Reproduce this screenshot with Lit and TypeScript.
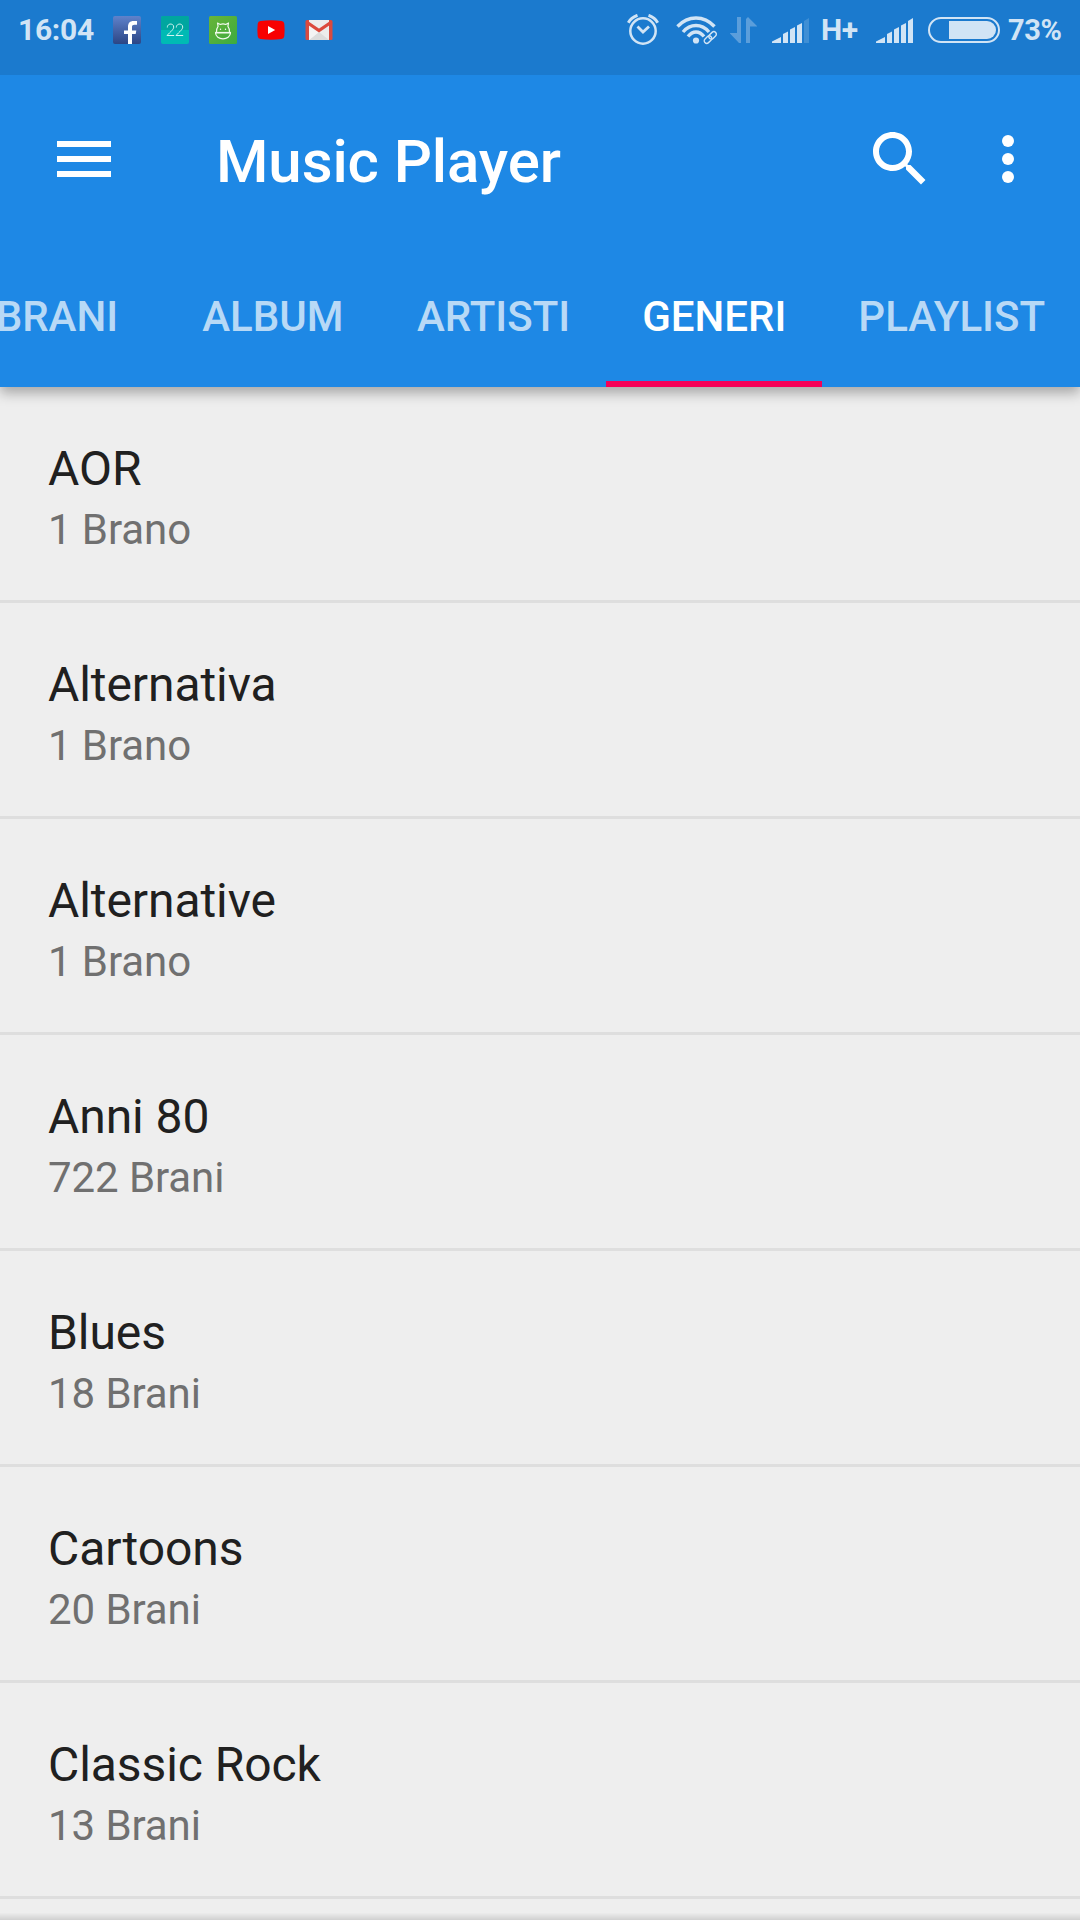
import { LitElement, html, css } from "lit";
import { customElement, property } from "lit/decorators.js";

interface Genre {
  name: string;
  count: string;
}

const TABS = ["BRANI", "ALBUM", "ARTISTI", "GENERI", "PLAYLIST"];

const GENRES: Genre[] = [
  { name: "AOR", count: "1 Brano" },
  { name: "Alternativa", count: "1 Brano" },
  { name: "Alternative", count: "1 Brano" },
  { name: "Anni 80", count: "722 Brani" },
  { name: "Blues", count: "18 Brani" },
  { name: "Cartoons", count: "20 Brani" },
  { name: "Classic Rock", count: "13 Brani" },
];

@customElement("status-bar")
export class StatusBar extends LitElement {
  static styles = css`
    :host {
      display: flex;
      box-sizing: border-box;
      height: 75px;
      padding: 0 20px 15px 18px;
      align-items: center;
      justify-content: space-between;
      background: #1b7ace;
      color: #d1e4f5;
      font-size: 30px;
      font-weight: 700;
    }
    .group {
      display: flex;
      align-items: center;
      height: 60px;
    }
    .icon {
      display: block;
      flex: none;
    }
    .left .icon {
      margin-right: 20px;
    }
    .time {
      width: 95px;
      line-height: 60px;
      letter-spacing: -0.3px;
    }
    .alarm { margin-right: 17px; }
    .wifi { margin-right: 12px; }
    .data { margin-right: 14px; }
    .signal { margin-right: 11px; }
    .net {
      width: 41px;
      margin-right: 14px;
      font-size: 30px;
      line-height: 60px;
      letter-spacing: -0.5px;
    }
    .last { margin-right: 14px; }
    .battery { margin-right: 8px; }
    .percent {
      font-size: 29px;
      line-height: 60px;
      letter-spacing: -0.4px;
      width: 52px;
      white-space: nowrap;
    }
  `;

  private bars(full: boolean, cls: string) {
    return html`<svg class="icon ${cls}" width="38" height="28" viewBox="0 0 38 28">
      <g fill="#d1e4f5">
        <path d="M0 27v-1.500L9 21v6z" />
        <path d="M11 27v-9l5-2.500V27z" />
        <path d="M18 27V13.500l5-2.500V27z" />
        <path d="M25 27V9.500L30 7v20z" />
        <path d="M32 27V5l5-3v25z" opacity=${full ? 1 : 0.2} />
      </g>
    </svg>`;
  }

  render() {
    return html`
      <div class="group left">
        <span class="time">16:04</span>
        <svg class="icon" width="28" height="28" viewBox="0 0 28 28">
          <defs>
            <linearGradient id="fb" x1="0" y1="0" x2="0" y2="1">
              <stop offset="0" stop-color="#5f82cb" />
              <stop offset="1" stop-color="#2b4585" />
            </linearGradient>
          </defs>
          <rect width="28" height="28" rx="2" fill="url(#fb)" />
          <path d="M15 28V18h-4v-3.500h4V11c0-4 2-6 5.500-6H24v3.700h-2.500c-1.800 0-2.500.8-2.500 2.300v3.500h4.300L22.700 18H19v10z" fill="#fff" />
        </svg>
        <svg class="icon" width="28" height="28" viewBox="0 0 28 28">
          <rect width="28" height="28" rx="2" fill="#00bab4" />
          <path d="M2 0h24a2 2 0 0 1 2 2v12H0V2a2 2 0 0 1 2-2z" fill="#00a69f" />
          <g fill="none" stroke="#d4f5f2" stroke-width="1">
            <path d="M6.300 11.500C6.300 7 12.700 7 12.700 11c0 2.500-3 4.500-6.700 8.500h7.200" />
            <path d="M15.300 11.500C15.300 7 21.700 7 21.700 11c0 2.500-3 4.500-6.700 8.500h7.200" />
          </g>
        </svg>
        <svg class="icon" width="28" height="28" viewBox="0 0 28 28">
          <defs>
            <linearGradient id="gr" x1="0" y1="0" x2="1" y2="1">
              <stop offset="0" stop-color="#69b437" />
              <stop offset="1" stop-color="#3bab40" />
            </linearGradient>
          </defs>
          <rect width="28" height="28" rx="1.500" fill="url(#gr)" />
          <g fill="none" stroke="#f1faec" stroke-width="1.200" stroke-linejoin="round">
            <path d="M7.500 16c0-2.500.6-4.500 1.600-5.700L8.500 7l2.800 1.500c1.700-.7 3.700-.7 5.400 0L19.500 7l-.6 3.300c1 1.200 1.600 3.200 1.600 5.700" />
            <path d="M6.500 16.600c0 8.400 15 8.400 15 0" />
            <path d="M6 16.700h16" stroke-width="1.600" />
          </g>
          <circle cx="11.500" cy="13.300" r="0.700" fill="#fff" />
          <circle cx="16.500" cy="13.300" r="0.700" fill="#fff" />
        </svg>
        <svg class="icon" width="28" height="28" viewBox="0 0 28 28">
          <path d="M3.500 5Q14 3.600 24.500 5q2.500.3 2.800 2.700.7 6.300 0 12.600-.3 2.400-2.800 2.700-10.500 1.400-21 0Q1 22.700.7 20.300 0 14 .7 7.700 1 5.300 3.500 5z" fill="#f80000" />
          <path d="M11 10v8l7.200-4z" fill="#fff" />
        </svg>
        <svg class="icon" width="28" height="28" viewBox="0 0 28 28">
          <rect x="0.500" y="4" width="27" height="20" rx="1.500" fill="#d84b40" />
          <path d="M4 4h20v20H4z" fill="#ececec" />
          <path d="M4 24l10-8 10 8z" fill="#dcdcdc" />
          <path d="M4 9.500V24L14 16z" fill="#f4f4f4" />
          <path d="M1.500 6L14 14.500 26.500 6" fill="none" stroke="#dc4a3d" stroke-width="3.300" />
          <path d="M4.500 4h19L14 11.500z" fill="#ededed" />
        </svg>
      </div>
      <div class="group">
        <svg class="icon alarm" width="32" height="32" viewBox="0 0 32 32" fill="none" stroke="#d1e4f5">
          <circle cx="16" cy="17" r="12.700" stroke-width="2.500" />
          <path d="M10.500 12.500l5.500 5.500 6-5.500" stroke-width="2.800" />
          <path d="M1.300 8.700Q4 3.500 10.500 1.300M30.700 8.700Q28 3.500 21.500 1.300" stroke-width="3" />
        </svg>
        <svg class="icon wifi" width="42" height="30" viewBox="0 0 42 30" fill="none" stroke="#d1e4f5">
          <g stroke-width="3.400">
            <path d="M1.500 11.500Q9.500 3 20 3t18.500 8.500" />
            <path d="M7 17q5.500-6.500 13-6.500T33 17" />
            <path d="M12 21.500q3.500-4.500 8-4.500t8 4.500" />
          </g>
          <circle cx="20" cy="25.500" r="3.100" fill="#d1e4f5" stroke="none" />
          <g transform="translate(34.300 22.500) rotate(-43) scale(0.94)">
            <rect x="-9.500" y="-4.500" width="19" height="9" fill="#1b7ace" stroke="none" />
            <rect x="-7.800" y="-2.700" width="9" height="5.400" rx="2.700" stroke-width="1.500" />
            <rect x="-1.200" y="-2.700" width="9" height="5.400" rx="2.700" stroke-width="1.500" />
          </g>
        </svg>
        <svg class="icon data" width="28" height="28" viewBox="0 0 28 28">
          <path d="M7 1h4v26H9L0 17.500v-.5h7zM16 27V3l2-2 9 9v.500h-7V27z" fill="#5b9edb" />
        </svg>
        ${this.bars(false, "signal")}
        <span class="net">H+</span>
        ${this.bars(true, "last")}
        <svg class="icon battery" width="72" height="28" viewBox="0 0 72 28">
          <rect x="1" y="2" width="70" height="24" rx="12" fill="none" stroke="#d1e4f5" stroke-width="2" />
          <path d="M21 5h38a9 9 0 0 1 0 18H21z" fill="#d1e4f5" />
        </svg>
        <span class="percent">73%</span>
      </div>
    `;
  }
}

@customElement("genre-row")
export class GenreRow extends LitElement {
  @property() name = "";
  @property() count = "";

  static styles = css`
    :host {
      display: block;
      box-sizing: border-box;
      height: 216px;
      padding: 54px 48px 0;
      border-bottom: 3px solid #dedede;
    }
    .name {
      font-size: 48px;
      line-height: 56px;
      letter-spacing: -0.08px;
      color: #202020;
    }
    .count {
      margin-top: 8px;
      font-size: 42px;
      line-height: 49px;
      letter-spacing: -0.08px;
      color: #707070;
    }
  `;

  render() {
    return html`
      <div class="name">${this.name}</div>
      <div class="count">${this.count}</div>
    `;
  }
}

@customElement("app-root")
export class AppRoot extends LitElement {
  static styles = css`
    :host {
      display: flex;
      flex-direction: column;
      width: 1080px;
      height: 1920px;
      overflow: hidden;
      background: #eeeeee;
      font-family: Roboto, "Liberation Sans", sans-serif;
    }
    .header {
      flex: none;
      position: relative;
      z-index: 1;
      background: #1e88e5;
      color: #fff;
      box-shadow: 0 6px 12px rgba(0, 0, 0, 0.3);
    }
    .toolbar {
      display: flex;
      align-items: center;
      box-sizing: border-box;
      height: 168px;
      padding: 0 36px 0 48px;
    }
    .icon {
      display: block;
      flex: none;
      width: 72px;
      height: 72px;
      fill: #fff;
    }
    .title {
      flex: 1;
      margin: 0 0 0 96px;
      padding-top: 5px;
      font-size: 60px;
      line-height: 72px;
      font-weight: 500;
      letter-spacing: -0.1px;
    }
    .search {
      margin-right: 36px;
    }
    .tabs {
      display: flex;
      justify-content: flex-end;
      height: 144px;
      overflow: hidden;
    }
    .tab {
      flex: none;
      box-sizing: border-box;
      min-width: 216px;
      padding: 3px 36px 0;
      border-bottom: 6px solid transparent;
      text-align: center;
      font-size: 42px;
      line-height: 141px;
      font-weight: 500;
      color: rgba(255, 255, 255, 0.7);
    }
    .tab:last-child {
      padding-right: 35px;
    }
    .tab.active {
      color: #fff;
      border-bottom-color: #f50057;
    }
    .list {
      flex: 1;
      min-height: 0;
      overflow: hidden;
    }
    .edge {
      flex: none;
      height: 7px;
      background: linear-gradient(#ececec, #d0d0d0);
    }
  `;

  render() {
    return html`
      <header class="header">
        <status-bar></status-bar>
        <div class="toolbar">
          <svg class="icon" viewBox="0 0 24 24">
            <path d="M3 18h18v-2H3v2zm0-5h18v-2H3v2zm0-7v2h18V6H3z" />
          </svg>
          <h1 class="title">Music Player</h1>
          <svg class="icon search" viewBox="0 0 24 24">
            <path d="M15.500 14h-.79l-.28-.27C15.410 12.590 16 11.110 16 9.500 16 5.910 13.090 3 9.500 3S3 5.910 3 9.500 5.910 16 9.500 16c1.610 0 3.090-.59 4.230-1.570l.27.28v.79l5 4.990L20.490 19l-4.990-5zm-6 0C7.010 14 5 11.990 5 9.500S7.010 5 9.500 5 14 7.010 14 9.500 11.990 14 9.500 14z" />
          </svg>
          <svg class="icon" viewBox="0 0 24 24">
            <circle cx="12" cy="6" r="2" />
            <circle cx="12" cy="12" r="2" />
            <circle cx="12" cy="18" r="2" />
          </svg>
        </div>
        <nav class="tabs">
          ${TABS.map((t) => html`<div class="tab ${t === "GENERI" ? "active" : ""}">${t}</div>`)}
        </nav>
      </header>
      <main class="list">
        ${GENRES.map((g) => html`<genre-row .name=${g.name} .count=${g.count}></genre-row>`)}
      </main>
      <div class="edge"></div>
    `;
  }
}
